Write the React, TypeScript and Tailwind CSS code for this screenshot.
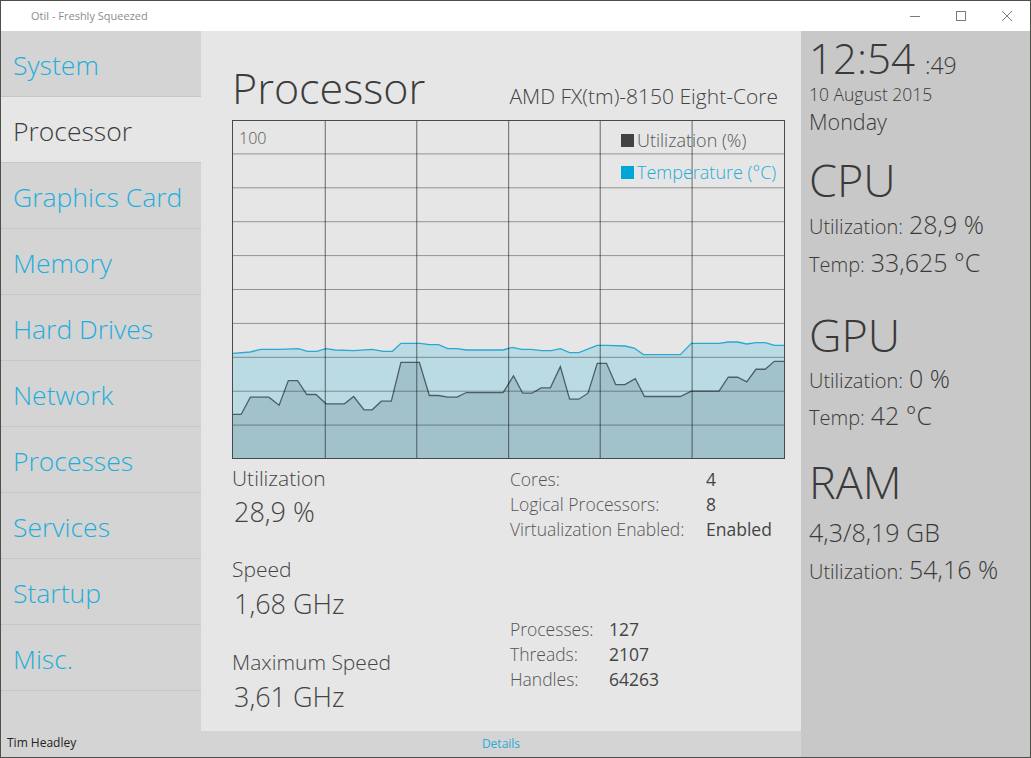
import React from "react";

const temp: [number, number][] = [
  [33, 730], [80, 726], [108, 718], [160, 718], [210, 716], [235, 724], [260, 724], [285, 716], [310, 720], [360, 722],
  [410, 718], [440, 724], [465, 724], [488, 700], [540, 700], [565, 704], [590, 704], [615, 716], [640, 716], [665, 720],
  [765, 720], [790, 712], [815, 718], [840, 718], [870, 722], [895, 722], [920, 716], [945, 728], [970, 728], [1020, 706],
  [1045, 706], [1095, 708], [1120, 714], [1145, 734], [1245, 734], [1275, 700], [1350, 700], [1375, 696], [1400, 696],
  [1425, 702], [1450, 698], [1475, 698], [1500, 706], [1526, 706],
];

const util: [number, number][] = [
  [33, 914], [55, 914], [80, 862], [130, 862], [158, 886], [183, 812], [208, 812], [233, 854], [258, 854], [285, 882],
  [335, 882], [360, 860], [388, 900], [410, 900], [435, 874], [462, 874], [488, 757], [538, 757], [565, 857], [590, 857],
  [615, 862], [640, 862], [665, 848], [765, 848], [793, 798], [818, 850], [843, 850], [868, 834], [893, 834], [920, 770],
  [945, 868], [970, 868], [995, 850], [1020, 760], [1045, 760], [1070, 824], [1095, 824], [1123, 806], [1148, 860],
  [1245, 860], [1275, 844], [1350, 844], [1375, 802], [1400, 802], [1425, 816], [1450, 778], [1475, 778], [1500, 754],
  [1526, 754],
];

const toLine = (p: [number, number][]) => p.map(([x, y]) => `${x},${y}`).join(" ");
const toArea = (p: [number, number][]) => `33,1045 ${toLine(p)} 1526,1045`;

const vLines = [283, 531, 780, 1028, 1277];
const hLines = [130, 232, 334, 436, 538, 640, 742, 844, 946];

const navItems = [
  "System",
  "Processor",
  "Graphics Card",
  "Memory",
  "Hard Drives",
  "Network",
  "Processes",
  "Services",
  "Startup",
  "Misc.",
];

function Chart() {
  return (
    <div className="relative w-[553px] h-[339px] border border-[#4a4a4a] bg-[#e6e6e6]">
      <svg
        className="absolute inset-0 w-full h-full"
        viewBox="33 31 1493 1014"
        preserveAspectRatio="none"
      >
        <polygon points={toArea(temp)} fill="#badbe4" />
        <polyline points={toLine(temp)} fill="none" stroke="#2aa8d2" strokeWidth="1.3" vectorEffect="non-scaling-stroke" />
        <polygon points={toArea(util)} fill="#a2c2cb" />
        <polyline points={toLine(util)} fill="none" stroke="#4b5f66" strokeWidth="1.3" vectorEffect="non-scaling-stroke" />
        {hLines.map((y) => (
          <line key={y} x1="33" x2="1526" y1={y} y2={y} stroke="rgba(0,0,0,0.36)" strokeWidth="1" vectorEffect="non-scaling-stroke" />
        ))}
        {vLines.map((x) => (
          <line key={x} x1={x} x2={x} y1="31" y2="1045" stroke="rgba(0,0,0,0.55)" strokeWidth="1" vectorEffect="non-scaling-stroke" />
        ))}
      </svg>
      <div className="absolute left-[6px] top-[9px] text-[16px] leading-none text-[#555] font-light">100</div>
      <div className="absolute left-[388px] top-[10px] flex flex-col gap-[14px]">
        <div className="flex items-center gap-[3px]">
          <span className="w-[13px] h-[13px] bg-[#424242]" />
          <span className="text-[18px] leading-[18px] text-[#555] font-light">Utilization (%)</span>
        </div>
        <div className="flex items-center gap-[3px]">
          <span className="w-[13px] h-[13px] bg-[#00a6d6]" />
          <span className="text-[18px] leading-[18px] text-[#22acd8] font-light">Temperature (°C)</span>
        </div>
      </div>
    </div>
  );
}

function InfoRow({ label, value, w }: { label: string; value: string; w: string }) {
  return (
    <div className="flex h-[25px] items-center text-[17.5px]">
      <span className={`${w} font-light text-[#555]`}>{label}</span>
      <span className="font-normal text-[#444]">{value}</span>
    </div>
  );
}

function StatLine({ label, value }: { label: string; value: string }) {
  return (
    <div className="flex items-baseline leading-none">
      <span className="text-[20px] leading-none">{label}</span>
      <span className="text-[25px] leading-none ml-[6px]">{value}</span>
    </div>
  );
}

export default function App() {
  return (
    <div className="w-[1031px] h-[758px] flex flex-col border border-[#4d5046] bg-white font-['Open_Sans','Noto_Sans',sans-serif] overflow-hidden">
      {/* Title bar */}
      <div className="h-[30px] flex items-center bg-white shrink-0">
        <div className="pl-[30px] text-[11px] text-[#8c8c8c]">Otil - Freshly Squeezed</div>
        <div className="ml-auto flex h-full">
          <div className="w-[46px] h-full flex items-center justify-center">
            <svg width="12" height="12" viewBox="0 0 12 12">
              <line x1="1" y1="6.5" x2="11" y2="6.5" stroke="#7a7a7a" strokeWidth="1" />
            </svg>
          </div>
          <div className="w-[46px] h-full flex items-center justify-center">
            <svg width="12" height="12" viewBox="0 0 12 12">
              <rect x="1.5" y="1.5" width="9" height="9" fill="none" stroke="#7a7a7a" strokeWidth="1" />
            </svg>
          </div>
          <div className="w-[46px] h-full flex items-center justify-center">
            <svg width="12" height="12" viewBox="0 0 12 12">
              <path d="M1 1 L11 11 M11 1 L1 11" stroke="#7a7a7a" strokeWidth="1" />
            </svg>
          </div>
        </div>
      </div>

      {/* Body */}
      <div className="flex flex-1 min-h-0">
        {/* Sidebar */}
        <div className="w-[200px] bg-[#d4d4d4] flex flex-col shrink-0">
          {navItems.map((n) => (
            <div
              key={n}
              className={`h-[66px] border-b border-[#c6c6c6] flex items-center pl-[12px] pt-[4px] text-[26.5px] leading-none font-light ${
                n === "Processor" ? "bg-[#e6e6e6] text-[#3c3c3c]" : "text-[#1eaedb]"
              }`}
            >
              {n}
            </div>
          ))}
          <div className="flex-1 flex items-end pl-[6px] pb-[5px] text-[12px] text-[#222]">Tim Headley</div>
        </div>

        {/* Main */}
        <div className="w-[600px] bg-[#e6e6e6] flex flex-col shrink-0">
          <div className="flex-1 pl-[31px]">
            <div className="w-[553px] pt-[35px] mb-[11px] flex items-baseline justify-between pr-[7px]">
              <span className="text-[43px] leading-none font-light text-[#3c3c3c]">Processor</span>
              <span className="text-[21px] leading-none font-light text-[#444]">AMD FX(tm)-8150 Eight-Core</span>
            </div>
            <Chart />
            <div className="flex text-[#444]">
              <div className="w-[278px] flex flex-col font-light">
                <div className="mt-[9px] text-[21px] leading-none">Utilization</div>
                <div className="mt-[9px] ml-[2px] text-[27px] leading-none">28,9 %</div>
                <div className="mt-[34px] text-[21px] leading-none">Speed</div>
                <div className="mt-[10px] ml-[2px] text-[27px] leading-none">1,68 GHz</div>
                <div className="mt-[35px] text-[21px] leading-none">Maximum Speed</div>
                <div className="mt-[10px] ml-[2px] text-[27px] leading-none">3,61 GHz</div>
              </div>
              <div className="flex flex-col">
                <div className="mt-[8px]">
                  <InfoRow label="Cores:" value="4" w="w-[196px]" />
                  <InfoRow label="Logical Processors:" value="8" w="w-[196px]" />
                  <InfoRow label="Virtualization Enabled:" value="Enabled" w="w-[196px]" />
                </div>
                <div className="mt-[75px]">
                  <InfoRow label="Processes:" value="127" w="w-[99px]" />
                  <InfoRow label="Threads:" value="2107" w="w-[99px]" />
                  <InfoRow label="Handles:" value="64263" w="w-[99px]" />
                </div>
              </div>
            </div>
          </div>
          <div className="h-[26px] bg-[#d4d4d4] flex items-center justify-center text-[12px] text-[#2aaad8]">
            Details
          </div>
        </div>

        {/* Right panel */}
        <div className="flex-1 bg-[#c8c8c8] pl-[8px] text-[#3a3a3a] font-light flex flex-col">
          <div className="mt-[6px] flex items-baseline leading-none">
            <span className="text-[42px] leading-none">12:54</span>
            <span className="text-[23px] leading-none ml-[10px]">:49</span>
          </div>
          <div className="mt-[7px] text-[17.5px] leading-none">10 August 2015</div>
          <div className="mt-[7px] text-[21.5px] leading-none">Monday</div>
          <div className="mt-[25px] text-[45px] leading-none">CPU</div>
          <div className="mt-[10px]"><StatLine label="Utilization:" value="28,9 %" /></div>
          <div className="mt-[13px]"><StatLine label="Temp:" value="33,625 °C" /></div>
          <div className="mt-[37px] text-[45px] leading-none">GPU</div>
          <div className="mt-[9px]"><StatLine label="Utilization:" value="0 %" /></div>
          <div className="mt-[12px]"><StatLine label="Temp:" value="42 °C" /></div>
          <div className="mt-[31px] text-[45px] leading-none">RAM</div>
          <div className="mt-[16px] text-[25px] leading-none">4,3/8,19 GB</div>
          <div className="mt-[12px]"><StatLine label="Utilization:" value="54,16 %" /></div>
        </div>
      </div>
    </div>
  );
}
